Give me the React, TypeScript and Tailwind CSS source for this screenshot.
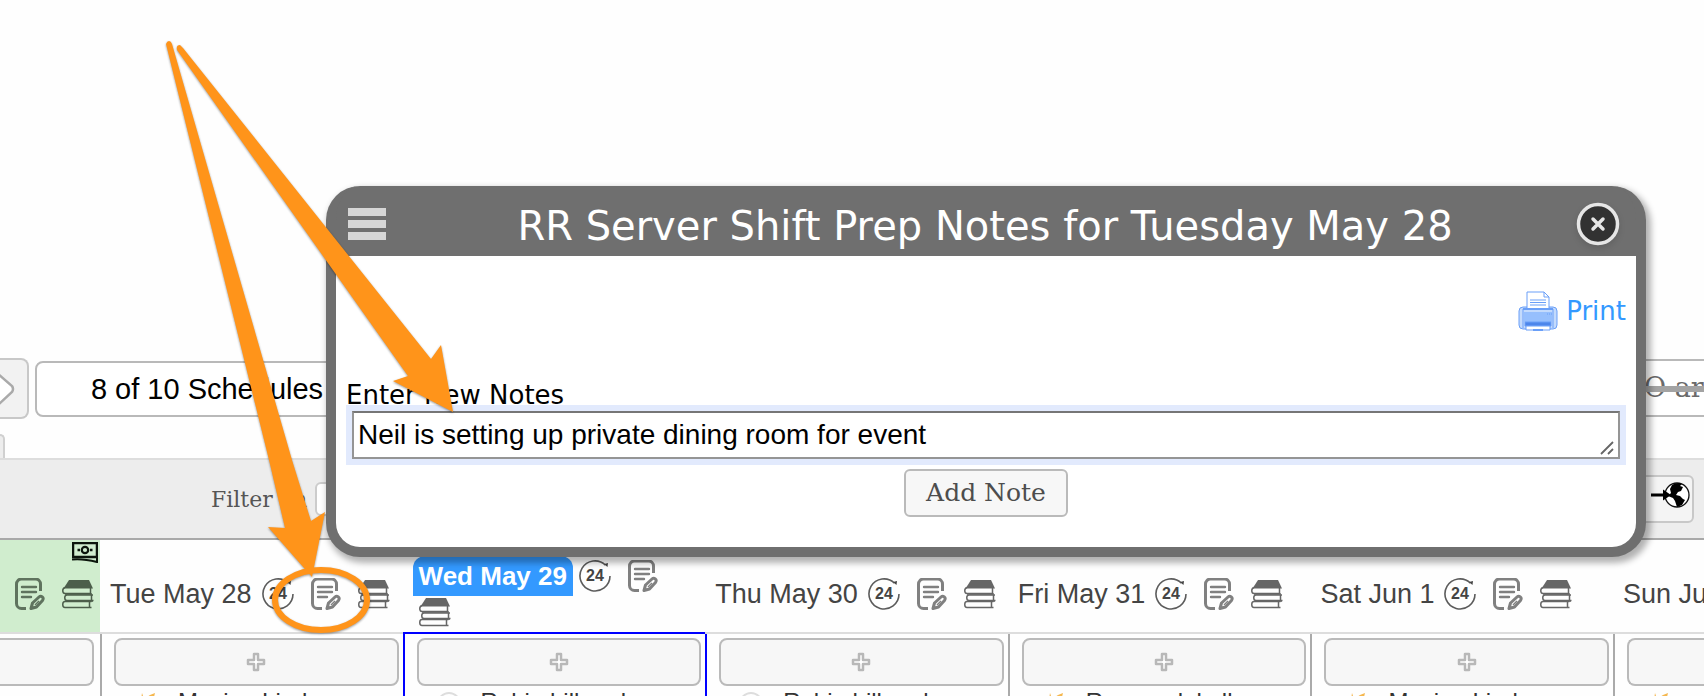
import React from 'react'

const days = [
  { label: 'Tue May 28', name: 'Maxine Lind', star: true },
  { label: 'Wed May 29', name: 'Robin hill and', star: false, today: true },
  { label: 'Thu May 30', name: 'Robin hill and', star: false },
  { label: 'Fri May 31', name: 'Ramon del all', star: true },
  { label: 'Sat Jun 1', name: 'Maxine Lind', star: true },
]

const AllDayIcon = () => (
  <svg className="h-8 w-8 shrink-0" viewBox="0 0 32 32" fill="none">
    <path d="M26.500 5.200A15 15 0 1 0 31 16" stroke="#5c5c5c" strokeWidth="1.600" />
    <path d="M25 4l4-1-.500 4z" fill="#444" />
    <text x="16" y="21" textAnchor="middle" fontSize="16" fontWeight="700" fill="#444" fontFamily="Liberation Sans, sans-serif">24</text>
  </svg>
)

const NoteIcon = () => (
  <svg className="h-8 w-8 shrink-0" viewBox="0 0 32 32" fill="none" stroke="currentColor">
    <path d="M26.500 13V6a5 5 0 0 0-5-5H7.500a5 5 0 0 0-5 5v19.500a5 5 0 0 0 5 5H12" strokeWidth="3" />
    <path d="M8 9h14M8 14h14M8 19h9" strokeWidth="2.400" strokeLinecap="round" />
    <path d="M17 30.500l1.500-5.500 6.500-6c2-1.800 5.500.500 3.500 3.500l-6 6.500z" strokeWidth="3" strokeLinejoin="round" />
    <path d="M21 27l4-4" strokeWidth="1.500" />
  </svg>
)

const BooksIcon = () => (
  <svg className="h-8 w-8 shrink-0" viewBox="0 0 32 32" fill="none" stroke="currentColor">
    <path d="M7 2H27l4 8.500H1.500z" fill="currentColor" stroke="none" />
    <path d="M3 9.500c-3 1-3 5.500 0 6h26M28.500 9.500v6" strokeWidth="1.500" />
    <path d="M31 17H5c-3 0-3 5.500 0 5.500h26.500M29.500 17v5.500" strokeWidth="1.500" />
    <path d="M29.500 23.500H3c-3 0-3 6 0 6h26.500M27.500 23.500v6" strokeWidth="1.500" />
    <path d="M3 16h27M4 23h27" strokeWidth="1.500" />
  </svg>
)

const BillIcon = () => (
  <svg className="absolute right-0.5 top-0.5 h-[21px] w-[26px]" viewBox="0 0 26 21" fill="none" stroke="#0c150c">
    <path d="M1 1h24v14H1z" strokeWidth="2.500" />
    <circle cx="13" cy="8" r="3.200" strokeWidth="2.200" />
    <path d="M5.500 8h2.500M18 8h2.500" strokeWidth="2.400" />
    <path d="M0 17.500c9-1 17 .500 25 2.500v-4" strokeWidth="2" />
  </svg>
)

const PlusIcon = () => (
  <svg className="h-5 w-5" viewBox="0 0 20 20" fill="#fff" stroke="#b8b8b8" strokeWidth="2.500" strokeLinejoin="round">
    <path d="M8 2h4v6h6v4h-6v6H8v-6H2V8h6z" />
  </svg>
)

const GlobeIcon = () => (
  <svg className="h-7 w-10" viewBox="0 0 40 28" fill="none">
    <circle cx="27" cy="14" r="12" fill="#fff" stroke="#111" strokeWidth="1.300" />
    <path d="M22 4c3-2 7-3 10-1l-2 2 3 1-2 4-3 1-2 3 4 1 3 3 2 1-3 5-5 2-2-6-2-3-5-2 3-3-1-4z" fill="#000" />
    <path d="M1 12.500h12V8.500l8 5.500-8 5.500v-4H1z" fill="#000" />
  </svg>
)

const PrinterIcon = () => (
  <svg className="h-10 w-10" viewBox="0 0 40 40" fill="none" stroke="#6a9ff8">
    <rect x="1" y="16" width="38" height="22" rx="4" fill="#c3dafc" />
    <path d="M5 18v19M35 18v19" />
    <path d="M6 21h28v10H6z" fill="#96bffd" stroke="none" />
    <path d="M9 18V1h17l5 5v12z" fill="#fff" />
    <path d="M26 1v5h5M12 9h16M12 11.500h16M12 14h16" />
    <path d="M5 18h30" strokeWidth="2" />
    <path d="M29 23h5" strokeDasharray="1 1" />
    <path d="M7 31h26v4H7z" fill="#4d86ea" />
    <path d="M8 35h24v4H8z" fill="#fff" />
    <path d="M15 39h10" strokeWidth="2" />
  </svg>
)

const CloseIcon = () => (
  <svg className="h-11 w-11 drop-shadow-md" viewBox="0 0 44 44" fill="none">
    <circle cx="22" cy="22" r="19.500" fill="#323232" stroke="#e6e6e6" strokeWidth="3.500" />
    <path d="M17 17l10 10M27 17L17 27" stroke="#e6e6e6" strokeWidth="3.500" strokeLinecap="round" />
  </svg>
)

const StarIcon = () => (
  <svg className="h-6 w-6" viewBox="0 0 24 24" fill="#f5b74e">
    <path d="M8 1l2 6 6-4 5-2-2 8 4 4-7 1-4 8-3-8-8-2 6-4z" />
  </svg>
)

const Toolbar = () => (
  <>
    <div className="flex h-[100px] items-start justify-between">
      <div className="flex items-center">
        <button aria-label="Next" className="flex h-[61px] w-[29px] items-center overflow-hidden rounded-r-lg border-2 border-l-0 border-[#c8c8c8] bg-[#f2f2f2]">
          <svg className="h-9 w-4" viewBox="0 0 16 36" fill="#fff" stroke="#aaa" strokeWidth="2.500">
            <path d="M-2 3l14 12q2 3 0 6L-2 34" />
          </svg>
        </button>
        <button className="ml-1.5 h-14 w-[344px] rounded-lg border-2 border-[#b9b9b9] bg-white text-[29px] leading-8 text-black">
          8 of 10 Schedules
        </button>
      </div>
      <button className="mt-px h-[58px] w-[200px] overflow-hidden whitespace-nowrap border-y-2 border-[#b9b9b9] bg-white pl-[140px] text-left font-['DejaVu_Serif',serif] text-[27px] text-[#6b6b6b] line-through decoration-[#a3a3a3] decoration-[6px]">
        O are
      </button>
    </div>
    <div className="flex">
      <div className="-mt-6 h-6 w-[5px] rounded-tr-xl border-r-2 border-t-2 border-[#d0d0d0] bg-[#ededed]" />
    </div>
    <div className="flex h-[82px] items-center justify-between border-b-2 border-t-2 border-b-[#a9a9a9] border-t-[#ddd] bg-[#ededed] pl-[211px] pr-2.5">
      <label className="flex items-center gap-2 font-['DejaVu_Serif',serif] text-[22px] text-[#555]">
        Filter on
        <input className="h-[34px] w-48 rounded-md border-2 border-[#ccc] bg-white" />
      </label>
      <button aria-label="Publish" className="flex h-12 w-24 items-center justify-end rounded-md border-2 border-[#c8c8c8] bg-[#f4f4f4] pb-2 pr-0.5">
        <GlobeIcon />
      </button>
    </div>
  </>
)

const AddButton = ({ side = 'full' }: { side?: 'full' | 'left' | 'right' }) => (
  <button
    aria-label="Add shift"
    className={
      'flex h-12 items-center justify-center border-2 border-[#bababa] bg-[#f7f7f7] ' +
      (side === 'left' ? 'w-full rounded-r-lg border-l-0' : side === 'right' ? 'w-full rounded-l-lg border-r-0' : 'w-full rounded-lg')
    }
  >
    {side === 'full' && <PlusIcon />}
  </button>
)

const Calendar = () => (
  <table className="w-full table-fixed border-separate border-spacing-0 text-[#444]">
    <colgroup>
      <col className="w-[100px]" />
      {days.map((d) => <col key={d.label} />)}
      <col className="w-[91px]" />
    </colgroup>
    <thead>
      <tr className="text-[27px] leading-8">
        <th className="relative border-b-2 border-[#ddd] bg-[#d0edce] p-0 font-normal text-[#5f735e]">
          <div className="flex h-[92px] items-center justify-end gap-4 pr-1.5 pt-4">
            <NoteIcon />
            <span className="text-[#4c5e4b]"><BooksIcon /></span>
          </div>
          <BillIcon />
        </th>
        {days.map((d) => (
          <th key={d.label} className={'border-b-2 p-0 font-normal ' + (d.today ? 'border-[#0000ff]' : 'border-[#ddd]')}>
            <div className={'flex h-[92px] flex-wrap items-center gap-x-4 pl-2.5 pt-4 ' + (d.today ? 'content-start' : 'content-center')}>
              {d.today
                ? <span className="-mr-2.5 whitespace-nowrap rounded-t-xl bg-[#3399ff] px-1.5 py-1 text-[26px] font-bold text-white">{d.label}</span>
                : <span className="-mr-1.5 whitespace-nowrap">{d.label}</span>}
              <AllDayIcon />
              <span className="text-[#808080]"><NoteIcon /></span>
              <span className={d.today ? 'pl-1.5 text-[#666]' : 'text-[#666]'}><BooksIcon /></span>
            </div>
          </th>
        ))}
        <th className="overflow-hidden whitespace-nowrap border-b-2 border-[#ddd] p-0 pl-2.5 pt-4 text-left font-normal">Sun Jun 2</th>
      </tr>
    </thead>
    <tbody>
      <tr className="align-top">
        <td className="p-0 pr-1.5 pt-1">
          <AddButton side="left" />
        </td>
        {days.map((d, i) => (
          <td
            key={d.label}
            className={'border-l-2 p-0 pl-3 pr-1 pt-1 ' + (d.today || days[i - 1]?.today ? 'border-[#0000ff]' : 'border-[#aaa]')}
          >
            <AddButton />
            <div className="flex items-start gap-5 pl-5 pt-1 text-2xl leading-6 text-[#333]">
              <span className="pt-0.5">
                {d.star ? <StarIcon /> : <span className="block h-6 w-6 rounded-full border-2 border-[#ddd]" />}
              </span>
              {d.name}
            </div>
          </td>
        ))}
        <td className="border-l-2 border-[#aaa] p-0 pl-3 pt-1">
          <AddButton side="right" />
          <div className="pl-5 pt-1.5"><StarIcon /></div>
        </td>
      </tr>
    </tbody>
  </table>
)

const NotesDialog = () => (
  <div
    role="dialog"
    aria-labelledby="notes-title"
    className="absolute left-[326px] right-[58px] top-[186px] rounded-[34px] border-x-[10px] border-b-[10px] border-[#6f6f6f] bg-[#6f6f6f] font-['DejaVu_Sans',sans-serif] shadow-[3px_4px_6px_2px_rgba(0,0,0,0.3)]"
  >
    <div className="flex h-[70px] items-center justify-between pl-3 pr-4 pt-1.5">
      <button aria-label="Menu" className="mr-2 flex w-[38px] flex-col gap-1">
        <span className="h-2 w-full bg-[#d6d6d6]" />
        <span className="h-2 w-full bg-[#d6d6d6]" />
        <span className="h-2 w-full bg-[#d6d6d6]" />
      </button>
      <h1 id="notes-title" className="whitespace-nowrap pt-1 text-[40px] leading-[48px] text-white">
        RR Server Shift Prep Notes for Tuesday May 28
      </h1>
      <button aria-label="Close"><CloseIcon /></button>
    </div>
    <div className="rounded-b-3xl bg-white px-2.5 pb-[30px] pt-[35px] text-2xl text-black">
      <div className="flex justify-end">
        <a href="#print" className="flex items-center gap-2 text-[26px] leading-10 text-[#3399ff]">
          <PrinterIcon />
          Print
        </a>
      </div>
      <label htmlFor="note" className="mt-12 block text-[26px] leading-8">Enter New Notes</label>
      <div className="relative px-1.5">
        <textarea
          id="note"
          rows={1}
          defaultValue="Neil is setting up private dining room for event"
          className="block h-12 w-full resize-none overflow-hidden border-2 border-[#959595] border-t-[#767676] bg-white px-1 py-1.5 font-['Liberation_Sans',sans-serif] text-[28px] leading-8 shadow-[0_0_0_6px_#e2eafd] outline-none"
        />
        <svg className="absolute bottom-1 right-3 h-3.5 w-3.5" viewBox="0 0 14 14" stroke="#666" strokeWidth="1.800">
          <path d="M1 13L13 1M8 13l5-5" />
        </svg>
      </div>
      <div className="mt-2.5 flex justify-center">
        <button className="h-12 rounded-md border-2 border-[#bababa] bg-[#f7f7f7] px-5 font-['DejaVu_Serif',serif] text-[25px] leading-8 text-[#4d4d4d]">
          Add Note
        </button>
      </div>
    </div>
  </div>
)

const Annotations = () => (
  <svg className="pointer-events-none absolute left-0 top-0 h-[650px] w-[470px] drop-shadow-[0_1px_1px_rgba(0,0,0,0.4)]" viewBox="0 0 470 650" fill="#ff941a">
    <path d="M166 44Q167 41 169 41T172 44L292 460L311 521L325 512L312 577L268 527L285 528L269 460Z" />
    <path d="M177 50Q176 45 180 45L183 48L431 359L441 345L453 412L393 381L408 376Z" />
    <ellipse cx="321" cy="600" rx="46" ry="30" fill="none" stroke="#ff941a" strokeWidth="6" />
  </svg>
)

const App = () => {
  return (
    <main className="relative h-screen overflow-hidden bg-[#fefefe] pt-[358px] font-['Liberation_Sans',Arial,sans-serif]">
      <Toolbar />
      <Calendar />
      <NotesDialog />
      <Annotations />
    </main>
  )
}

export default App
